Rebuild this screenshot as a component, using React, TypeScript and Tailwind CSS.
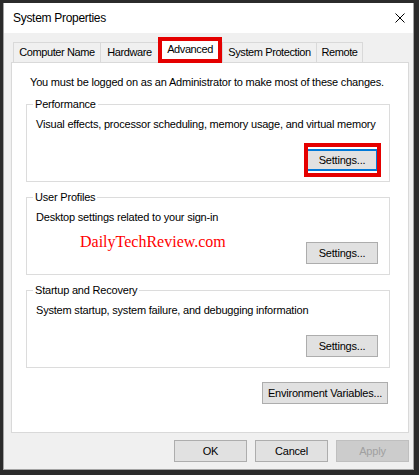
import type { ReactNode } from "react";

const TABS = [
  { label: "Computer Name", w: "w-[87px]" },
  { label: "Hardware", w: "w-[58px]" },
  { label: "Advanced", w: "w-[64px]", active: true },
  { label: "System Protection", w: "w-[94px]" },
  { label: "Remote", w: "w-[47px]", last: true },
];

function Group({ title, children }: { title: string; children: ReactNode }) {
  return (
    <div className="relative w-[364px] border border-[#dcdcdc] pt-[13px] pl-[9px] pr-[11px] pb-[10px]">
      <span className="absolute left-[6px] -top-[7px] bg-white px-[2px]">{title}</span>
      {children}
    </div>
  );
}

function SettingsButton({ focused }: { focused?: boolean }) {
  if (focused) {
    return (
      <div className="relative">
        <button className="w-[72px] h-[22px] border-2 border-[#0078d7] bg-[#e1e1e1] flex items-center justify-center">
          Settings...
        </button>
        {/* highlight frame drawn over the default button */}
        <div className="absolute -left-[2px] -right-[3px] -top-[6px] -bottom-[6px] border-[4px] border-[#e50000]" />
      </div>
    );
  }
  return (
    <button className="w-[72px] h-[22px] border border-[#adadad] bg-[#e1e1e1] flex items-center justify-center">
      Settings...
    </button>
  );
}

export default function App() {
  return (
    <div className="w-[419px] h-[475px] bg-[#2b2b2b] pt-[3px] pl-[3px] font-['Liberation_Sans',Arial,sans-serif] text-[11px] leading-[13px] text-black tracking-[-0.2px]">
      <div className="w-[411px] h-[467px] flex flex-col border-x border-b border-[#a3a3a3] bg-[#f0f0f0]">
        {/* title bar */}
        <div className="h-[30px] shrink-0 bg-white flex items-center justify-between pl-[9px] pr-[8px]">
          <span className="text-[12px] tracking-[-0.3px]">System Properties</span>
          <svg width="10" height="10" viewBox="0 0 10 10">
            <path d="M0.5 0.5L9.5 9.5M9.5 0.5L0.5 9.5" stroke="#000" strokeWidth="1" />
          </svg>
        </div>

        <div className="flex-1 flex flex-col pl-[7px] pr-[4px] pt-[4px]">
          {/* tab strip */}
          <div className="flex items-end h-[25px] ml-[2px] tracking-[-0.4px]">
            {TABS.map((t) =>
              t.active ? (
                <div
                  key={t.label}
                  className={`${t.w} relative z-10 h-[26px] -mb-[1px] bg-white border-[4px] border-[#e50000] flex items-center justify-center pb-[1px]`}
                >
                  {t.label}
                </div>
              ) : (
                <div
                  key={t.label}
                  className={`${t.w} h-[20px] border-t border-l ${t.last ? "border-r" : ""} border-[#d9d9d9] flex items-center justify-center`}
                >
                  {t.label}
                </div>
              )
            )}
          </div>

          {/* tab page */}
          <div className="h-[371px] shrink-0 border border-[#d9d9d9] bg-white pt-[13px] pl-[14px]">
            <p className="pl-[4px]">You must be logged on as an Administrator to make most of these changes.</p>

            <div className="mt-[15px]">
              <Group title="Performance">
                <p>Visual effects, processor scheduling, memory usage, and virtual memory</p>
                <div className="flex justify-end mt-[18px]">
                  <SettingsButton focused />
                </div>
              </Group>
            </div>

            <div className="mt-[15px]">
              <Group title="User Profiles">
                <p>Desktop settings related to your sign-in</p>
                <div className="flex items-start justify-between mt-[18px]">
                  <span className="ml-[44px] -mt-[9px] font-['Liberation_Serif',serif] text-[16px] leading-[18px] tracking-normal text-[#ff0000]">
                    DailyTechReview.com
                  </span>
                  <SettingsButton />
                </div>
              </Group>
            </div>

            <div className="mt-[15px]">
              <Group title="Startup and Recovery">
                <p>System startup, system failure, and debugging information</p>
                <div className="flex justify-end mt-[18px]">
                  <SettingsButton />
                </div>
              </Group>
            </div>

            <div className="w-[364px] flex justify-end pr-[2px] mt-[14px]">
              <button className="w-[126px] h-[22px] border border-[#adadad] bg-[#e1e1e1] flex items-center justify-center">
                Environment Variables...
              </button>
            </div>
          </div>

          {/* dialog buttons */}
          <div className="flex justify-end gap-[8px] mt-[7px]">
            <button className="w-[73px] h-[22px] border border-[#adadad] bg-[#e1e1e1] flex items-center justify-center">
              OK
            </button>
            <button className="w-[73px] h-[22px] border border-[#adadad] bg-[#e1e1e1] flex items-center justify-center">
              Cancel
            </button>
            <button
              disabled
              className="w-[73px] h-[22px] border border-[#bfbfbf] bg-[#cccccc] text-[#a0a0a0] flex items-center justify-center"
            >
              Apply
            </button>
          </div>
        </div>
      </div>
    </div>
  );
}
